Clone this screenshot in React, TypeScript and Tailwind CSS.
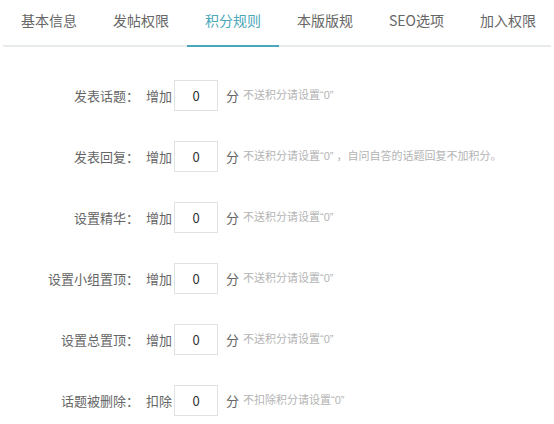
const TABS = ["基本信息", "发帖权限", "积分规则", "本版版规", "SEO选项", "加入权限"];
const ACTIVE = 2;

const ROWS = [
  { label: "发表话题：", action: "增加", hint: "不送积分请设置“0”" },
  { label: "发表回复：", action: "增加", hint: "不送积分请设置“0” ，自问自答的话题回复不加积分。" },
  { label: "设置精华：", action: "增加", hint: "不送积分请设置“0”" },
  { label: "设置小组置顶：", action: "增加", hint: "不送积分请设置“0”" },
  { label: "设置总置顶：", action: "增加", hint: "不送积分请设置“0”" },
  { label: "话题被删除：", action: "扣除", hint: "不扣除积分请设置“0”" },
];

export default function App() {
  return (
    <div className="w-[554px] h-[424px] bg-white overflow-hidden font-['Noto_Sans_CJK_SC',sans-serif] text-[#666]">
      {/* Tabs */}
      <div className="mx-[3px] flex border-b-2 border-[#e8ebeb] whitespace-nowrap">
        {TABS.map((t, i) => (
          <div
            key={t}
            className={
              "shrink-0 px-[18px] pt-[10px] pb-[15px] text-[14px] leading-[20px] -mb-[2px] border-b-2 " +
              (i === ACTIVE ? "text-[#4aa7b9] border-[#4aa7b9]" : "text-[#666] border-transparent")
            }
          >
            {t}
          </div>
        ))}
      </div>

      {/* Form */}
      <div className="mt-[33px] flex flex-col gap-[30px] whitespace-nowrap">
        {ROWS.map((r) => (
          <div key={r.label} className="flex items-center h-[31px]">
            <div className="w-[139px] text-right text-[13px] text-[#666]">{r.label}</div>
            <div className="ml-[7px] text-[13px] text-[#666]">{r.action}</div>
            <input
              readOnly
              value="0"
              className="ml-[2px] w-[44px] h-[31px] border border-[#dfe3e3] text-center text-[13px] text-[#333] outline-none"
            />
            <div className="ml-[8px] text-[13px] text-[#666]">分</div>
            <div className="ml-[4px] text-[11px] text-[#b4b4b4] font-['Liberation_Sans','Noto_Sans_CJK_SC',sans-serif]">
              {r.hint}
            </div>
          </div>
        ))}
      </div>
    </div>
  );
}
